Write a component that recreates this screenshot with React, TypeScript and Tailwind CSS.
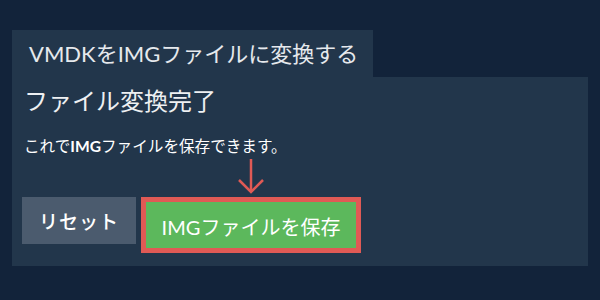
import React from 'react';

const font = { fontFamily: 'Lato, "Noto Sans CJK JP", sans-serif' };

const App: React.FC = () => {
  return (
    <div className="w-[600px] h-[300px] bg-[#12233a] pt-[30px] px-[12px]" style={font}>
      {/* Tab */}
      <div className="w-[361px] h-[47px] bg-[#22364b] flex items-center pl-[17px] text-[22px] text-[#e6e9ed]">
        VMDKをIMGファイルに変換する
      </div>

      {/* Panel */}
      <div className="w-[576px] h-[189px] bg-[#22364b] pt-[9px] px-[12px] text-white">
        <h2 className="text-[24px] leading-[30px] text-[#eef0f2]">ファイル変換完了</h2>
        <p className="mt-[20px] text-[15.6px] leading-[20px] text-white">
          これで<span className="font-bold">IMG</span>ファイルを保存できます。
        </p>

        <div className="mt-[41px] -ml-[2px] flex items-start gap-[5px]">
          <button className="w-[114px] h-[47px] pt-[3px] bg-[#4b5b6e] text-white text-[19px] font-medium tracking-[1px]">
            リセット
          </button>
          <div className="relative">
            {/* Arrow */}
            <svg
              className="absolute left-[96px] top-[-39px]"
              width="28"
              height="36"
              viewBox="0 0 28 36"
              fill="none"
              stroke="#e05a55"
              strokeWidth="2.5"
            >
              <line x1="14" y1="1" x2="14" y2="34" />
              <polyline points="2,22 14,34 26,22" />
            </svg>
            <button className="w-[220px] h-[56px] pt-[4px] border-[5px] border-[#e05a55] bg-[#5cb85c] text-white text-[20px]">
              IMGファイルを保存
            </button>
          </div>
        </div>
      </div>
    </div>
  );
};

export default App;
